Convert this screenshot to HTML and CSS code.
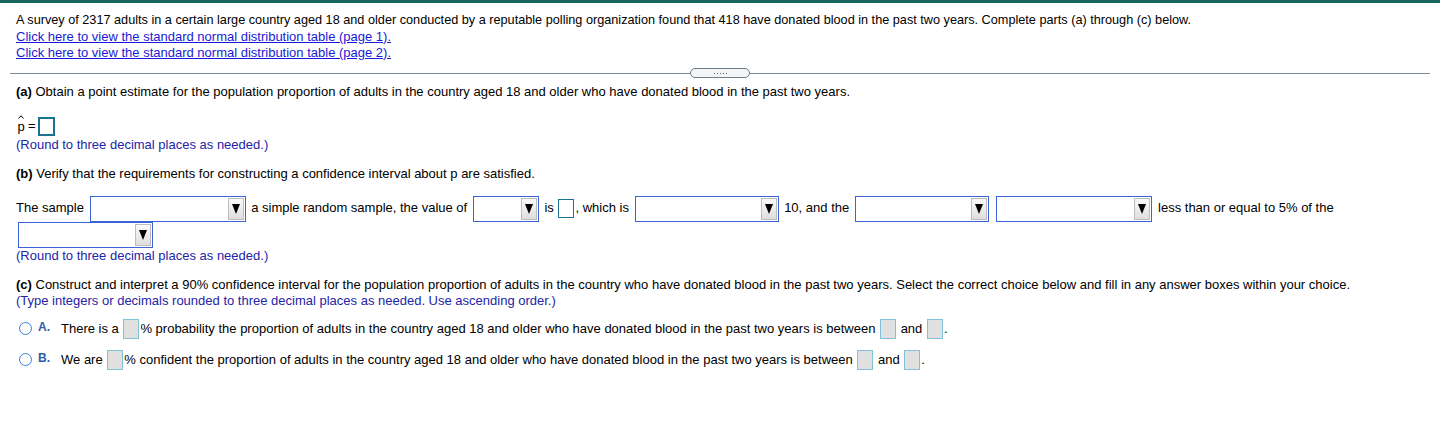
FILE: index.html
```html
<!DOCTYPE html>
<html>
<head>
<meta charset="utf-8">
<link rel="stylesheet" href="styles.css">
</head>
<body>
<div class="page">
  <div class="intro">
    <div class="line lead">A survey of 2317 adults in a certain large country aged 18 and older conducted by a reputable polling organization found that 418 have donated blood in the past two years. Complete parts (a) through (c) below.</div>
    <div class="line"><a class="link" href="#">Click here to view the standard normal distribution table (page 1).</a></div>
    <div class="line"><a class="link" href="#">Click here to view the standard normal distribution table (page 2).</a></div>
  </div>

  <div class="divider">
    <span class="rule"></span>
    <span class="more"><span class="dot"></span><span class="dot"></span><span class="dot"></span><span class="dot"></span><span class="dot"></span></span>
    <span class="rule"></span>
  </div>

  <div class="content">
    <div class="line q-a"><b>(a)</b> Obtain a point estimate for the population proportion of adults in the country aged 18 and older who have donated blood in the past two years.</div>

    <div class="phat-row">
      <span class="phat"><svg class="hat" width="6" height="4" viewBox="0 0 6 4"><polyline points="0.5,3.5 3,0.8 5.5,3.5" fill="none" stroke="#000" stroke-width="1"/></svg><span class="p">p</span></span>
      <span class="eq">=</span>
      <span class="answer"></span>
    </div>
    <div class="line note note-a">(Round to three decimal places as needed.)</div>

    <div class="line q-b"><b>(b)</b> Verify that the requirements for constructing a confidence interval about p are satisfied.</div>

    <div class="sample">The sample <span class="dd dd-156"><span class="dd-btn"></span></span> a simple random sample, the value of <span class="dd dd-65"><span class="dd-btn"></span></span> is <span class="answer small"></span>, which is <span class="dd dd-144"><span class="dd-btn"></span></span> 10, and the <span class="dd dd-134"><span class="dd-btn"></span></span> <span class="dd dd-156"><span class="dd-btn"></span></span> less than or equal to 5% of the <span class="dd dd-135"><span class="dd-btn"></span></span></div>
    <div class="line note">(Round to three decimal places as needed.)</div>

    <div class="line q-c"><b>(c)</b> Construct and interpret a 90% confidence interval for the population proportion of adults in the country who have donated blood in the past two years. Select the correct choice below and fill in any answer boxes within your choice.</div>
    <div class="line note">(Type integers or decimals rounded to three decimal places as needed. Use ascending order.)</div>

    <div class="choice choice-a">
      <span class="radio"></span>
      <span class="letter">A.</span>
      <span class="ctext">There is a <span class="gbox"></span>% probability the proportion of adults in the country aged 18 and older who have donated blood in the past two years is between <span class="gbox"></span> and <span class="gbox"></span>.</span>
    </div>
    <div class="choice">
      <span class="radio"></span>
      <span class="letter">B.</span>
      <span class="ctext">We are <span class="gbox"></span>% confident the proportion of adults in the country aged 18 and older who have donated blood in the past two years is between <span class="gbox"></span> and <span class="gbox"></span>.</span>
    </div>
  </div>
</div>
</body>
</html>
```

FILE: styles.css
```css
html, body {
  margin: 0;
  padding: 0;
  background: #ffffff;
}
body {
  border-top: 3px solid #17675b;
  font-family: "Liberation Sans", Arial, sans-serif;
  font-size: 13px;
  color: #000;
}
.page {
  padding: 9px 10px 0 10px;
}
.intro {
  padding-left: 6px;
}
.line {
  line-height: 16px;
  height: 16px;
  white-space: nowrap;
}
.lead {
  font-size: 12.7px;
  height: 17px;
}
.link {
  color: #1a1ad6;
  text-decoration: underline;
}
.divider {
  display: flex;
  align-items: center;
  height: 10px;
  margin-top: 7px;
}
.rule {
  flex: 1;
  height: 1px;
  background: #7d8b97;
}
.more {
  box-sizing: border-box;
  display: flex;
  justify-content: center;
  align-items: center;
  gap: 2px;
  width: 60px;
  height: 10px;
  border: 1px solid #6f7d8a;
  border-radius: 5px;
  background: #f3f5f7;
}
.dot {
  width: 1px;
  height: 1px;
  background: #5f6d7a;
}
.content {
  padding-left: 6px;
}
.q-a {
  margin-top: 6px;
}
.phat-row {
  display: flex;
  align-items: flex-end;
  height: 22px;
  margin-top: 14px;
}
.phat {
  display: inline-flex;
  flex-direction: column;
  align-items: center;
  width: 8px;
  margin-left: 1px;
}
.hat {
  display: block;
  margin-bottom: 1px;
}
.p {
  line-height: 14px;
  margin-bottom: 2px;
}
.eq {
  line-height: 14px;
  margin: 0 2px 3px 3px;
}
.answer {
  display: inline-block;
  box-sizing: border-box;
  width: 17px;
  height: 19px;
  border: 2px solid #1d7294;
  background: #fff;
}
.answer.small {
  width: 16px;
  height: 19px;
  border-width: 1.5px;
  margin: 0 1px;
  vertical-align: middle;
}
.note {
  color: #2424a6;
}
.note-a {
  margin-top: 1px;
}
.q-b {
  margin-top: 13px;
}
.sample {
  margin-top: 13px;
  line-height: 26px;
  width: 1330px;
}
.dd {
  display: inline-flex;
  justify-content: flex-end;
  align-items: center;
  box-sizing: border-box;
  height: 26px;
  padding-right: 1px;
  border: 1px solid #3a62d9;
  background: #fff;
  vertical-align: middle;
  margin: 0 2px;
}
.dd-156 { width: 156px; }
.dd-65 { width: 66px; }
.dd-144 { width: 144px; }
.dd-134 { width: 134px; }
.dd-135 { width: 135px; }
.dd-btn {
  box-sizing: border-box;
  display: flex;
  justify-content: center;
  align-items: flex-start;
  padding-top: 5px;
  width: 16px;
  height: 22px;
  border: 1px solid #bdbdbd;
  background: linear-gradient(#fbfbfb, #dedede);
}
.dd-btn::before {
  content: "";
  width: 0;
  height: 0;
  border-left: 4.5px solid transparent;
  border-right: 4.5px solid transparent;
  border-top: 10px solid #000;
}
.q-c {
  margin-top: 13px;
}
.choice {
  display: flex;
  align-items: center;
  height: 20px;
  margin-top: 11px;
  white-space: nowrap;
}
.choice-a {
  margin-top: 10px;
}
.radio {
  box-sizing: border-box;
  width: 13px;
  height: 13px;
  border: 1px solid #3c7fd6;
  border-radius: 50%;
  margin-left: 3px;
  margin-top: -1px;
}
.letter {
  font-weight: bold;
  font-size: 12px;
  color: #2e5ea8;
  margin-left: 6px;
  width: 23px;
  margin-top: -4px;
}
.ctext {
  line-height: 20px;
}
.gbox {
  display: inline-block;
  box-sizing: border-box;
  width: 16px;
  height: 20px;
  background: #e0e0e0;
  border: 1px solid #80c2d6;
  vertical-align: middle;
  margin: -2px 1px 0 1px;
}
```
